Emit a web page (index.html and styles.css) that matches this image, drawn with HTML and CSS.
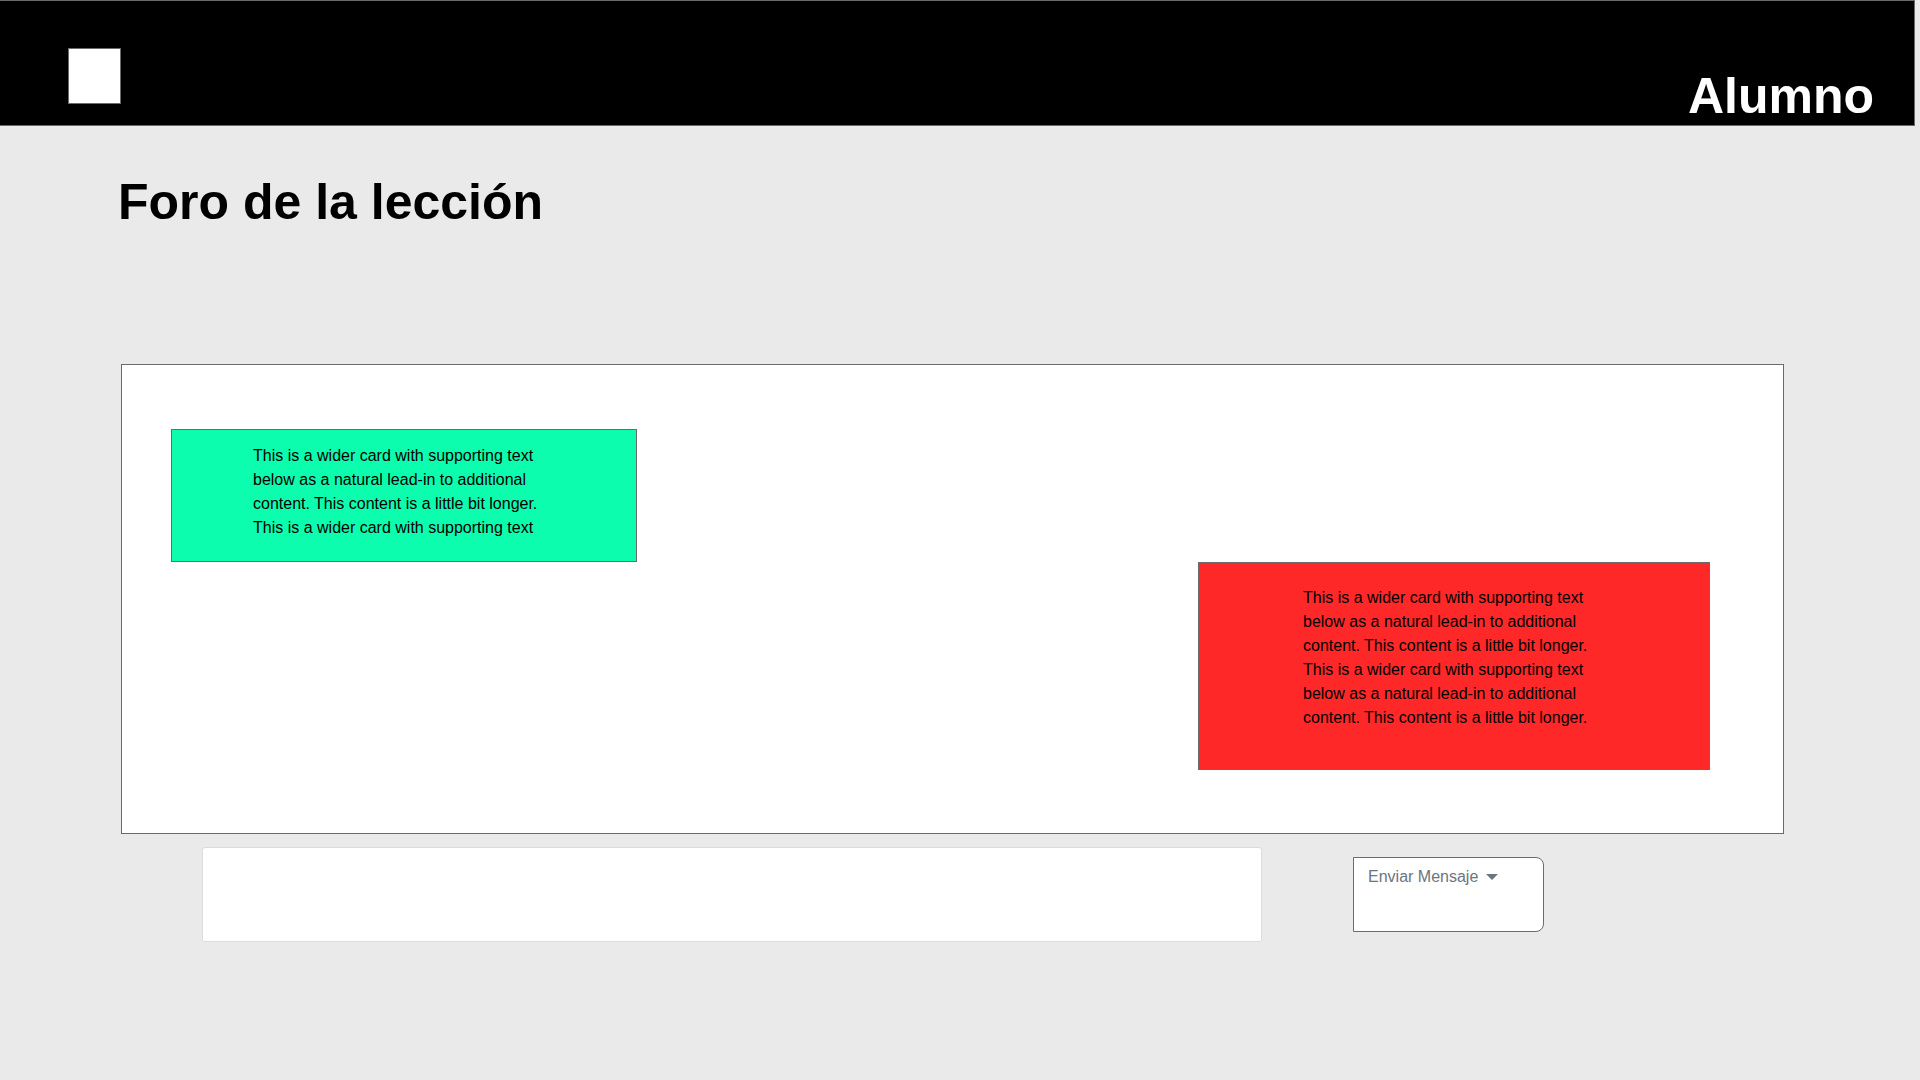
FILE: index.html
```html
<!DOCTYPE html>
<html lang="es">
<head>
<meta charset="utf-8">
<title>Foro de la lección</title>
<link rel="stylesheet" href="styles.css">
</head>
<body>
<header class="topbar">
  <div class="logo"></div>
  <div class="role">Alumno</div>
</header>
<h1 class="page-title">Foro de la lección</h1>
<section class="forum">
  <div class="msg msg-green">
    <p>This is a wider card with supporting text below as a natural lead-in to additional content. This content is a little bit longer. This is a wider card with supporting text</p>
  </div>
  <div class="msg msg-red">
    <p>This is a wider card with supporting text below as a natural lead-in to additional content. This content is a little bit longer. This is a wider card with supporting text below as a natural lead-in to additional content. This content is a little bit longer.</p>
  </div>
</section>
<div class="composer">
  <div class="input-box"></div>
  <button class="send-btn">Enviar Mensaje <span class="caret"></span></button>
</div>
</body>
</html>
```
FILE: styles.css
```css
html, body {
  margin: 0;
  padding: 0;
}
body {
  background: #eaeaea;
  font-family: "Liberation Sans", Arial, sans-serif;
  color: #000;
  min-height: 1080px;
}
.topbar {
  box-sizing: border-box;
  width: 1915px;
  height: 126px;
  background: #000;
  border: 1px solid #6a6a6a;
  border-left: none;
  display: flex;
  justify-content: space-between;
  align-items: flex-end;
  padding: 0 40px 0 68px;
}
.logo {
  align-self: flex-start;
  margin-top: 47px;
  box-sizing: border-box;
  width: 53px;
  height: 56px;
  background: #fff;
  border: 1px solid #6a6a6a;
}
.role {
  color: #fff;
  font-weight: bold;
  font-size: 50px;
  line-height: 57px;
}
.page-title {
  margin: 48px 0 0 118px;
  font-size: 50px;
  line-height: 57px;
  font-weight: bold;
}
.forum {
  box-sizing: border-box;
  margin: 133px 0 0 121px;
  width: 1663px;
  height: 470px;
  background: #fff;
  border: 1px solid #6a6a6a;
  padding-top: 64px;
  display: flex;
  flex-direction: column;
}
.msg {
  box-sizing: border-box;
  border: 1px solid #6a6a6a;
}
.msg p {
  margin: 0;
  width: 290px;
  font-size: 16px;
  line-height: 24px;
}
.msg-green {
  margin-left: 49px;
  width: 466px;
  height: 133px;
  background: #0dfdae;
  padding: 14px 0 0 81px;
}
.msg-red {
  align-self: flex-end;
  margin-right: 73px;
  width: 512px;
  height: 208px;
  background: #fe2828;
  padding: 23px 0 0 104px;
}
.composer {
  display: flex;
  align-items: flex-start;
  margin: 13px 0 0 202px;
  gap: 91px;
}
.input-box {
  box-sizing: border-box;
  width: 1060px;
  height: 95px;
  background: #fff;
  border: 1px solid #dcdcdc;
  border-radius: 3px;
}
.send-btn {
  box-sizing: border-box;
  margin-top: 10px;
  width: 191px;
  height: 75px;
  background: #fff;
  border: 1px solid #6c6c6c;
  border-radius: 0 8px 8px 0;
  padding: 9px 14px;
  text-align: left;
  display: flex;
  align-items: flex-start;
  font-family: "Liberation Sans", Arial, sans-serif;
  font-size: 16px;
  line-height: 20px;
  color: #6c757d;
  cursor: pointer;
}
.caret {
  display: inline-block;
  margin: 7px 0 0 8px;
  width: 0;
  height: 0;
  border-left: 6px solid transparent;
  border-right: 6px solid transparent;
  border-top: 6px solid #6c757d;
}
```
